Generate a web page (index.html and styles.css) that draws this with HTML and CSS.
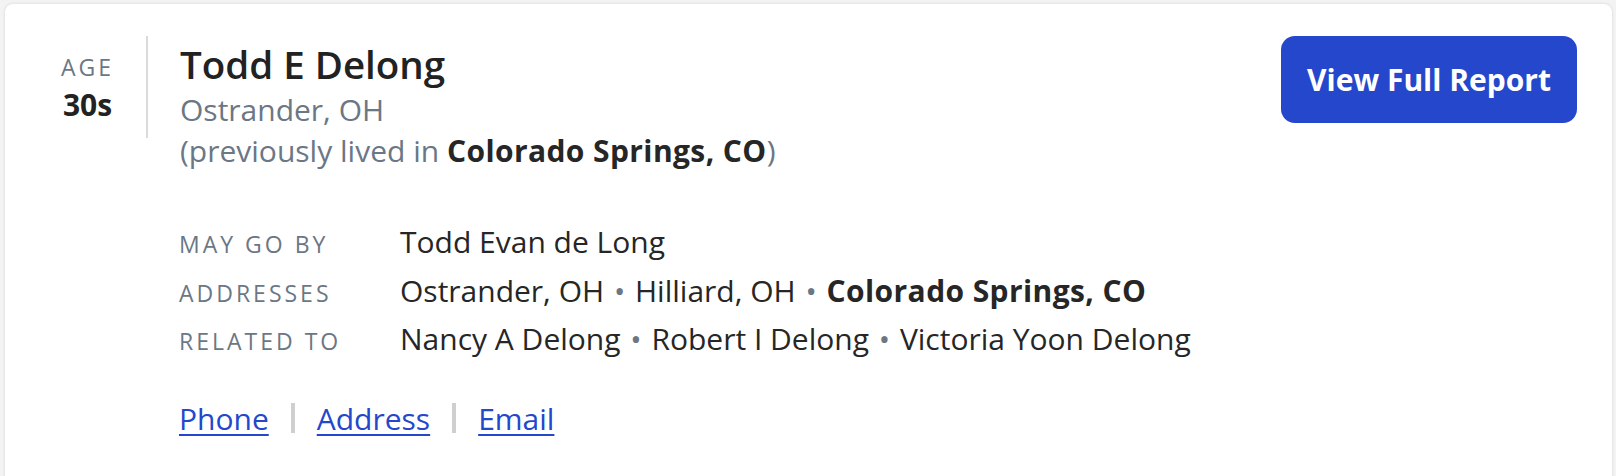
FILE: index.html
```html
<!DOCTYPE html>
<html lang="en">
<head>
<meta charset="utf-8">
<title>Todd E Delong</title>
<link rel="stylesheet" href="styles.css">
</head>
<body>
<div class="card">
  <div class="header">
    <div class="age">
      <div class="age-label">AGE</div>
      <div class="age-value">30s</div>
    </div>
    <div class="ident">
      <h1 class="name">Todd E Delong</h1>
      <div class="loc">Ostrander, OH</div>
      <div class="loc">(previously lived in <b class="strong">Colorado Springs, CO</b>)</div>
    </div>
    <a class="btn" href="#">View Full Report</a>
  </div>
  <div class="details">
    <div class="row">
      <div class="label">MAY GO BY</div>
      <div class="value">Todd Evan de Long</div>
    </div>
    <div class="row">
      <div class="label">ADDRESSES</div>
      <div class="value">Ostrander, OH <span class="dot">•</span> Hilliard, OH <span class="dot">•</span> <b class="strong">Colorado Springs, CO</b></div>
    </div>
    <div class="row">
      <div class="label">RELATED TO</div>
      <div class="value">Nancy A Delong <span class="dot">•</span> Robert I Delong <span class="dot">•</span> Victoria Yoon Delong</div>
    </div>
  </div>
  <div class="links">
    <a href="#" class="link">Phone</a>
    <span class="sep"></span>
    <a href="#" class="link">Address</a>
    <span class="sep"></span>
    <a href="#" class="link">Email</a>
  </div>
</div>
</body>
</html>
```

FILE: styles.css
```css
html, body {
  margin: 0;
  padding: 0;
}
body {
  background: #f3f3f3;
  font-family: "Open Sans", "Noto Sans", sans-serif;
  color: #262626;
  height: 476px;
  overflow: hidden;
}
.card {
  margin: 4px 4px 0 5px;
  background: #fff;
  border-radius: 8px;
  box-shadow: 0 0 3px rgba(0, 0, 0, 0.14);
  padding: 32px 35px 40px 21px;
  min-height: 420px;
}
.header {
  display: flex;
  align-items: flex-start;
}
.age {
  width: 122px;
  height: 102px;
  border-right: 2px solid #dadada;
  text-align: center;
  padding-top: 16px;
  box-sizing: border-box;
  padding-left: 3px;
}
.age-label {
  font-size: 23px;
  letter-spacing: 3px;
  color: #6b7785;
  line-height: 31px;
}
.age-value {
  font-size: 30px;
  font-weight: 700;
  color: #222;
  line-height: 41px;
  margin-top: 1px;
}
.ident {
  flex: 1;
  padding-left: 32px;
  padding-top: 3px;
}
.name {
  margin: 0;
  font-size: 38.5px;
  font-weight: 600;
  line-height: 50px;
  color: #222;
}
.loc {
  font-size: 30px;
  line-height: 41px;
  color: #6b7785;
}
.strong {
  font-weight: 700;
  color: #262626;
  letter-spacing: 0.4px;
}
.btn {
  display: flex;
  align-items: center;
  justify-content: center;
  width: 296px;
  height: 87px;
  border-radius: 14px;
  background: #2447cb;
  color: #fff;
  font-size: 30px;
  font-weight: 700;
  text-decoration: none;
}
.details {
  margin-top: 50px;
  padding-left: 153px;
}
.row {
  display: flex;
  align-items: baseline;
  height: 48.5px;
}
.label {
  width: 221px;
  font-size: 23px;
  letter-spacing: 3px;
  color: #6b7785;
}
.value {
  font-size: 30px;
  color: #262626;
}
.dot {
  color: #6b7785;
  margin: 0 2px;
}
.links {
  display: flex;
  align-items: center;
  padding-left: 153px;
  margin-top: 31px;
  gap: 22px;
}
.link {
  font-size: 30px;
  color: #2447cb;
  text-decoration: underline;
  text-underline-offset: 4px;
  text-decoration-thickness: 2px;
}
.sep {
  width: 4px;
  height: 30px;
  background: #cfcfcf;
}
```
